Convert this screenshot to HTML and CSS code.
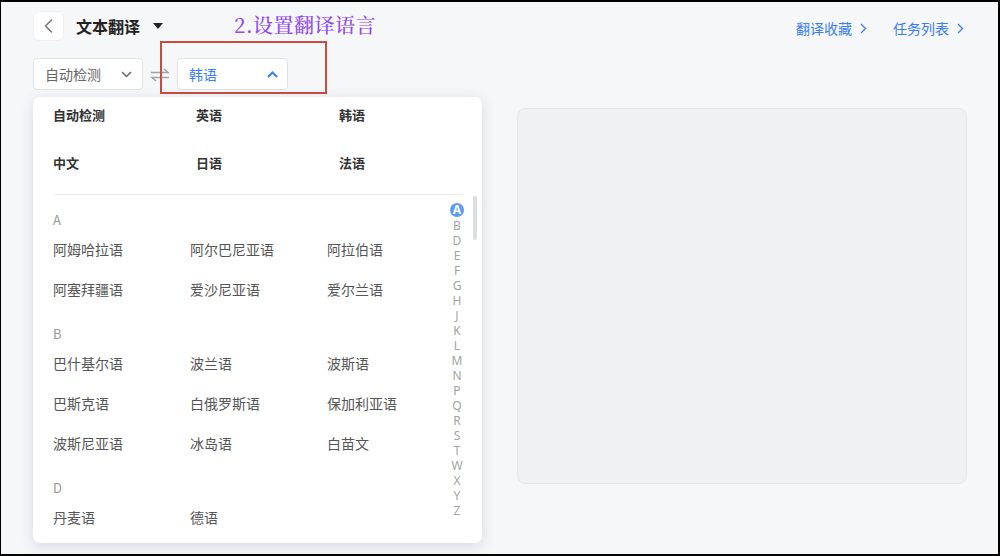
FILE: index.html
```html
<!DOCTYPE html>
<html lang="zh-CN">
<head>
<meta charset="utf-8">
<title>文本翻译</title>
<link rel="stylesheet" href="styles.css">
</head>
<body>
<div class="frame">
  <div class="header">
    <div class="back-btn">
      <svg width="9" height="14" viewBox="0 0 9 14"><path d="M7.5 1 L1.5 7 L7.5 13" fill="none" stroke="#777" stroke-width="1.6" stroke-linecap="round" stroke-linejoin="round"/></svg>
    </div>
    <div class="title">文本翻译</div>
    <div class="caret"></div>
    <div class="links">
      <a class="link">翻译收藏<svg width="7" height="11" viewBox="0 0 7 11"><path d="M1 1 L5.5 5.5 L1 10" fill="none" stroke="#3a7ef5" stroke-width="1.3"/></svg></a>
      <a class="link">任务列表<svg width="7" height="11" viewBox="0 0 7 11"><path d="M1 1 L5.5 5.5 L1 10" fill="none" stroke="#3a7ef5" stroke-width="1.3"/></svg></a>
    </div>
  </div>

  <div class="toolbar">
    <div class="select select-src">
      <span>自动检测</span>
      <svg width="11" height="7" viewBox="0 0 11 7"><path d="M1 1 L5.5 5.5 L10 1" fill="none" stroke="#666" stroke-width="1.5"/></svg>
    </div>
    <svg class="swap" width="20" height="14" viewBox="0 0 20 14"><path d="M1 4.5 H18 L14 1" fill="none" stroke="#a0a4aa" stroke-width="1.6"/><path d="M19 9.5 H2 L6 13" fill="none" stroke="#a0a4aa" stroke-width="1.6"/></svg>
    <div class="select select-dst">
      <span>韩语</span>
      <svg width="11" height="7" viewBox="0 0 11 7"><path d="M1 6 L5.5 1.5 L10 6" fill="none" stroke="#3a7ef5" stroke-width="2"/></svg>
    </div>
  </div>

  <div class="content">
    <div class="panel panel-left"></div>
    <div class="panel panel-right"></div>
  </div>

  <div class="annotation">2.设置翻译语言</div>
  <div class="highlight"></div>

  <div class="dropdown">
    <div class="common">
      <div>自动检测</div><div>英语</div><div>韩语</div>
      <div>中文</div><div>日语</div><div>法语</div>
    </div>
    <div class="divider"></div>
    <div class="list">
      <div class="group-head">A</div>
      <div class="group">
        <div>阿姆哈拉语</div><div>阿尔巴尼亚语</div><div>阿拉伯语</div>
        <div>阿塞拜疆语</div><div>爱沙尼亚语</div><div>爱尔兰语</div>
      </div>
      <div class="group-head">B</div>
      <div class="group">
        <div>巴什基尔语</div><div>波兰语</div><div>波斯语</div>
        <div>巴斯克语</div><div>白俄罗斯语</div><div>保加利亚语</div>
        <div>波斯尼亚语</div><div>冰岛语</div><div>白苗文</div>
      </div>
      <div class="group-head">D</div>
      <div class="group">
        <div>丹麦语</div><div>德语</div>
      </div>
    </div>
    <div class="scrollbar"></div>
    <div class="index">
      <div class="active">A</div><div>B</div><div>D</div><div>E</div><div>F</div><div>G</div><div>H</div><div>J</div><div>K</div><div>L</div><div>M</div><div>N</div><div>P</div><div>Q</div><div>R</div><div>S</div><div>T</div><div>W</div><div>X</div><div>Y</div><div>Z</div>
    </div>
  </div>
</div>
</body>
</html>
```

FILE: styles.css
```css
html, body {
  margin: 0;
  padding: 0;
}

body {
  font-family: "Noto Sans CJK SC", "Noto Sans", sans-serif;
}

.frame {
  position: relative;
  width: 1000px;
  height: 556px;
  box-sizing: border-box;
  border: 2px solid #000;
  border-left-width: 1px;
  background: #f6f7f9;
  padding: 9px 32px 0 32px;
  overflow: hidden;
}

.header {
  display: flex;
  align-items: center;
  height: 30px;
}

.back-btn {
  width: 31px;
  height: 30px;
  background: #fff;
  border-radius: 6px;
  display: flex;
  align-items: center;
  justify-content: center;
  box-sizing: border-box;
  border: 1px solid #eef0f3;
}

.title {
  margin-left: 12px;
  font-size: 16px;
  font-weight: 700;
  color: #222;
  line-height: 22px;
}

.caret {
  margin-left: 13px;
  width: 0;
  height: 0;
  border-left: 5px solid transparent;
  border-right: 5px solid transparent;
  border-top: 6px solid #222;
}

.links {
  margin-left: auto;
  display: flex;
  align-items: center;
  gap: 26px;
  padding-top: 4px;
  padding-right: 2px;
}

.link {
  display: flex;
  align-items: center;
  gap: 8px;
  font-size: 14px;
  color: #3a7ef5;
  line-height: 20px;
}

.toolbar {
  margin-top: 17px;
  display: flex;
  align-items: center;
  height: 32px;
}

.select {
  height: 32px;
  box-sizing: border-box;
  background: #fff;
  border: 1px solid #dfe2e7;
  border-radius: 4px;
  display: flex;
  align-items: center;
  justify-content: space-between;
  padding: 0 10px 0 11px;
  font-size: 14px;
}

.select-src {
  width: 110px;
  color: #666;
}

.select-dst {
  width: 111px;
  color: #3a7ef5;
  padding-right: 9px;
}

.swap {
  margin: 0 7px 0 7px;
  position: relative;
  top: 1px;
}

.content {
  margin-top: 18px;
  display: flex;
  gap: 35px;
}

.panel {
  flex: none;
  height: 376px;
  box-sizing: border-box;
  border-radius: 8px;
}

.panel-left {
  width: 449px;
  background: #fff;
}

.panel-right {
  width: 450px;
  background: #f0f1f3;
  border: 1px solid #e5e7ec;
}

.annotation {
  position: absolute;
  left: 233px;
  top: 10px;
  font-family: "Noto Serif CJK SC", "Noto Sans CJK SC", serif;
  font-size: 20px;
  font-weight: 500;
  color: #8f48f2;
  line-height: 26px;
  letter-spacing: 0.5px;
}

.highlight {
  position: absolute;
  left: 159px;
  top: 39px;
  width: 167px;
  height: 53px;
  box-sizing: border-box;
  border: 2px solid #cc4b3e;
}

.dropdown {
  position: absolute;
  left: 32px;
  top: 95px;
  width: 449px;
  height: 446px;
  box-sizing: border-box;
  background: #fff;
  border-radius: 7px;
  box-shadow: 0 3px 14px rgba(40, 60, 110, 0.16);
  padding: 7px 20px 0 20px;
  overflow: hidden;
}

.common {
  display: grid;
  grid-template-columns: repeat(3, 143px);
  row-gap: 26px;
  font-size: 13px;
  font-weight: 700;
  color: #333;
  line-height: 22px;
}

.divider {
  margin-top: 20px;
  height: 1px;
  background: #ebedf1;
}

.list {
  padding-top: 15px;
}

.group-head {
  font-size: 13px;
  line-height: 20px;
  color: #999;
  margin-top: 13px;
}

.group-head:first-child {
  margin-top: 0;
}

.group {
  display: grid;
  grid-template-columns: repeat(3, 137px);
  font-size: 14px;
  line-height: 39px;
  padding-bottom: 1px;
  color: #555;
}

.group div {
  height: 40px;
}

.scrollbar {
  position: absolute;
  left: 440px;
  top: 99px;
  width: 4px;
  height: 44px;
  border-radius: 2px;
  background: #dcdde0;
}

.index {
  position: absolute;
  left: 417px;
  top: 106px;
  width: 14px;
  font-family: "Noto Sans", "DejaVu Sans", sans-serif;
  font-size: 12px;
  line-height: 15px;
  color: #a3a3a3;
  text-align: center;
}

.index .active {
  width: 14px;
  height: 14px;
  border-radius: 50%;
  background: #5b9bf8;
  color: #fff;
  font-weight: 700;
  line-height: 14px;
  margin-bottom: 1px;
}
```
